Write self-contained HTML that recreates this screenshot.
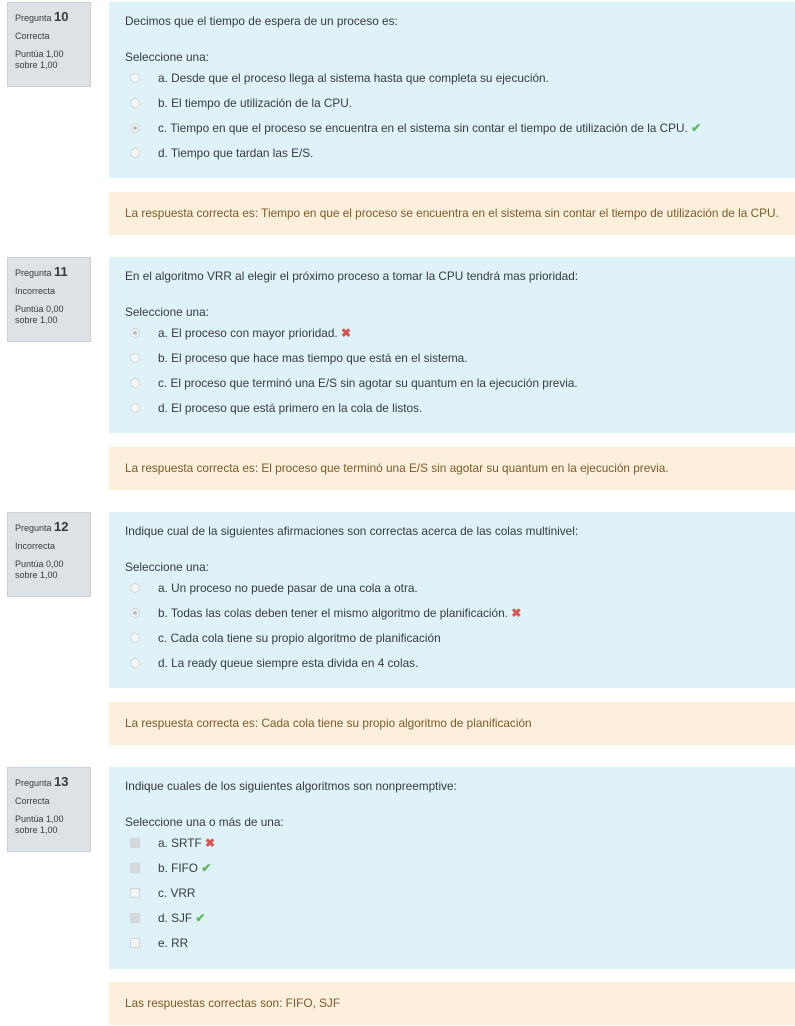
<!DOCTYPE html>
<html><head><meta charset="utf-8"><style>
*{margin:0;padding:0;box-sizing:border-box}
body{width:795px;height:1026px;background:#fff;font-family:"Liberation Sans",sans-serif;color:#373a3c;position:relative;overflow:hidden;font-size:11.8px;line-height:14px}
.info{position:absolute;left:7px;width:84px;height:85px;background:#dee2e6;border:1px solid #cad0d7;padding:8px 0 0 7px;font-size:9px;color:#373a3c;line-height:11px}
.info b{font-size:13px;font-weight:bold}
.info .s{margin-top:7px}
.q{position:absolute;left:109px;right:0;background:#def2f8}
.fb{position:absolute;left:109px;right:0;height:43px;background:#fcefdc;color:#7d5a29;padding:14px 0 0 16px;white-space:nowrap}
.t{position:absolute;left:16px;white-space:nowrap}
.r{position:absolute;left:21px;width:10px;height:10px;border-radius:50%;border:1px solid #d0d4d8;background:#f4f5f6}
.r.on::after{content:"";position:absolute;left:2px;top:2px;width:4px;height:4px;border-radius:50%;background:#b8bcc0}
.c{position:absolute;left:21px;width:10px;height:10px;border:1px solid #d0d4d8;background:#f4f5f6;border-radius:1px}
.c.on{background:#d6d9dc}
.o{position:absolute;left:49px;white-space:nowrap}
.ok{color:#5cb85c;font-weight:bold;font-size:12px;line-height:14px}
.x{color:#d9534f;font-weight:bold;font-size:12px;line-height:14px}
</style></head><body>

<div class="info" style="top:2px">Pregunta <b>10</b><br><div class="s">Correcta</div><div class="s">Puntúa 1,00<br>sobre 1,00</div></div>
<div class="q" style="top:2px;height:176px">
<div class="t" style="top:12px">Decimos que el tiempo de espera de un proceso es:</div>
<div class="t" style="top:48px">Seleccione una:</div>
<div class="r" style="top:71px"></div><div class="o" style="top:69px">a. Desde que el proceso llega al sistema hasta que completa su ejecución.</div>
<div class="r" style="top:96px"></div><div class="o" style="top:94px">b. El tiempo de utilización de la CPU.</div>
<div class="r on" style="top:121px"></div><div class="o" style="top:119px">c. Tiempo en que el proceso se encuentra en el sistema sin contar el tiempo de utilización de la CPU. <span class="ok">✔</span></div>
<div class="r" style="top:146px"></div><div class="o" style="top:144px">d. Tiempo que tardan las E/S.</div>
</div>
<div class="fb" style="top:192px">La respuesta correcta es: Tiempo en que el proceso se encuentra en el sistema sin contar el tiempo de utilización de la CPU.</div>

<div class="info" style="top:257px">Pregunta <b>11</b><br><div class="s">Incorrecta</div><div class="s">Puntúa 0,00<br>sobre 1,00</div></div>
<div class="q" style="top:257px;height:176px">
<div class="t" style="top:12px">En el algoritmo VRR al elegir el próximo proceso a tomar la CPU tendrá mas prioridad:</div>
<div class="t" style="top:48px">Seleccione una:</div>
<div class="r on" style="top:71px"></div><div class="o" style="top:69px">a. El proceso con mayor prioridad. <span class="x">✖</span></div>
<div class="r" style="top:96px"></div><div class="o" style="top:94px">b. El proceso que hace mas tiempo que está en el sistema.</div>
<div class="r" style="top:121px"></div><div class="o" style="top:119px">c. El proceso que terminó una E/S sin agotar su quantum en la ejecución previa.</div>
<div class="r" style="top:146px"></div><div class="o" style="top:144px">d. El proceso que está primero en la cola de listos.</div>
</div>
<div class="fb" style="top:447px">La respuesta correcta es: El proceso que terminó una E/S sin agotar su quantum en la ejecución previa.</div>

<div class="info" style="top:512px">Pregunta <b>12</b><br><div class="s">Incorrecta</div><div class="s">Puntúa 0,00<br>sobre 1,00</div></div>
<div class="q" style="top:512px;height:176px">
<div class="t" style="top:12px">Indique cual de la siguientes afirmaciones son correctas acerca de las colas multinivel:</div>
<div class="t" style="top:48px">Seleccione una:</div>
<div class="r" style="top:71px"></div><div class="o" style="top:69px">a. Un proceso no puede pasar de una cola a otra.</div>
<div class="r on" style="top:96px"></div><div class="o" style="top:94px">b. Todas las colas deben tener el mismo algoritmo de planificación. <span class="x">✖</span></div>
<div class="r" style="top:121px"></div><div class="o" style="top:119px">c. Cada cola tiene su propio algoritmo de planificación</div>
<div class="r" style="top:146px"></div><div class="o" style="top:144px">d. La ready queue siempre esta divida en 4 colas.</div>
</div>
<div class="fb" style="top:702px">La respuesta correcta es: Cada cola tiene su propio algoritmo de planificación</div>

<div class="info" style="top:767px">Pregunta <b>13</b><br><div class="s">Correcta</div><div class="s">Puntúa 1,00<br>sobre 1,00</div></div>
<div class="q" style="top:767px;height:202px">
<div class="t" style="top:12px">Indique cuales de los siguientes algoritmos son nonpreemptive:</div>
<div class="t" style="top:48px">Seleccione una o más de una:</div>
<div class="c on" style="top:71px"></div><div class="o" style="top:69px">a. SRTF <span class="x">✖</span></div>
<div class="c on" style="top:96px"></div><div class="o" style="top:94px">b. FIFO <span class="ok">✔</span></div>
<div class="c" style="top:121px"></div><div class="o" style="top:119px">c. VRR</div>
<div class="c on" style="top:146px"></div><div class="o" style="top:144px">d. SJF <span class="ok">✔</span></div>
<div class="c" style="top:171px"></div><div class="o" style="top:169px">e. RR</div>
</div>
<div class="fb" style="top:982px">Las respuestas correctas son: FIFO, SJF</div>

</body></html>
